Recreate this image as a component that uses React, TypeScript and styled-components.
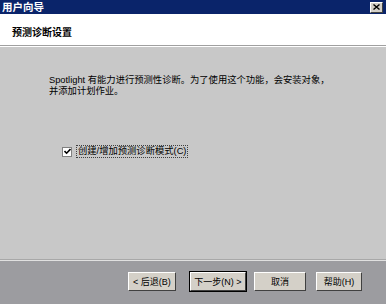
import { createGlobalStyle, styled } from "styled-components";

const GlobalStyle = createGlobalStyle`
  html, body {
    margin: 0;
    padding: 0;
    background: #c8c8c8;
  }
  body {
    font-family: "Liberation Sans", "Noto Sans CJK SC", sans-serif;
  }
`;

const Window = styled.div`
  width: 386px;
  height: 304px;
  display: flex;
  flex-direction: column;
  overflow: hidden;
  background: #c8c8c8;
`;

const TitleBar = styled.div`
  height: 14px;
  background: #0a246a;
  display: flex;
  align-items: center;
  justify-content: space-between;
  padding: 0 2px 0 2px;
`;

const TitleText = styled.span`
  color: #ffffff;
  font-size: 10.5px;
  font-weight: bold;
  line-height: 14px;
`;

const CloseButton = styled.div`
  width: 11px;
  height: 9px;
  margin-right: 1px;
  background: #d4d0c8;
  border-top: 1px solid #ffffff;
  border-left: 1px solid #ffffff;
  border-right: 1px solid #404040;
  border-bottom: 1px solid #404040;
  display: flex;
  align-items: center;
  justify-content: center;
`;

const Header = styled.div`
  height: 31px;
  background: #ffffff;
  display: flex;
  align-items: center;
  padding-left: 12px;
  border-bottom: 1px solid #a0a0a0;
`;

const HeaderText = styled.span`
  font-size: 10px;
  font-weight: bold;
  color: #000000;
  padding-top: 4px;
`;

const HeaderEdge = styled.div`
  height: 1px;
  background: #ffffff;
`;

const Content = styled.div`
  flex: 1;
  display: flex;
  flex-direction: column;
  padding: 28px 0 0 49px;
`;

const Paragraph = styled.p`
  margin: 0;
  font-size: 9.3px;
  line-height: 11px;
  color: #000000;
`;

const CheckRow = styled.label`
  display: flex;
  align-items: center;
  gap: 5px;
  margin: 49px 0 0 13px;
`;

const Box = styled.span`
  width: 8px;
  height: 8px;
  background: #ffffff;
  border: 1px solid #808080;
  display: flex;
  align-items: center;
  justify-content: center;
`;

const CheckLabel = styled.span`
  font-size: 9.3px;
  line-height: 11px;
  color: #000000;
  outline: 1px dotted #404040;
  padding: 0 1px;
`;

const BottomEdge = styled.div`
  height: 1px;
  background: #e0e0e0;
  border-top: 1px solid #a8a8a8;
`;

const ButtonBar = styled.div`
  height: 43px;
  background: #9c9ca0;
  display: flex;
  align-items: flex-start;
  justify-content: flex-end;
  padding: 11px 24px 0 0;
  box-sizing: border-box;
`;

const Button = styled.div<{ $default?: boolean; $width: number; $gap: number }>`
  width: ${(p) => p.$width}px;
  height: 19px;
  box-sizing: border-box;
  margin-left: ${(p) => p.$gap}px;
  background: #d4d0c8;
  border-top: 1px solid #ffffff;
  border-left: 1px solid #ffffff;
  border-right: 1px solid #404040;
  border-bottom: 1px solid #404040;
  outline: ${(p) => (p.$default ? "1px solid #000000" : "none")};
  display: flex;
  align-items: center;
  justify-content: center;
  font-size: 9px;
  color: #000000;
  white-space: nowrap;
`;

function CloseGlyph() {
  return (
    <svg width="7" height="6" viewBox="0 0 7 6">
      <path d="M0.5 0.5 L6.5 5.5 M6.5 0.5 L0.5 5.5" stroke="#000" strokeWidth="1.4" />
    </svg>
  );
}

function Check() {
  return (
    <svg width="7" height="7" viewBox="0 0 7 7">
      <path d="M0.5 3 L2.6 5.2 L6.5 1" stroke="#000" strokeWidth="1.6" fill="none" />
    </svg>
  );
}

export default function App() {
  return (
    <>
      <GlobalStyle />
      <Window>
        <TitleBar>
          <TitleText>用户向导</TitleText>
          <CloseButton>
            <CloseGlyph />
          </CloseButton>
        </TitleBar>
        <Header>
          <HeaderText>预测诊断设置</HeaderText>
        </Header>
        <HeaderEdge />
        <Content>
          <Paragraph>
            Spotlight 有能力进行预测性诊断。为了使用这个功能，会安装对象，
            <br />
            并添加计划作业。
          </Paragraph>
          <CheckRow>
            <Box>
              <Check />
            </Box>
            <CheckLabel>创建/增加预测诊断模式(C)</CheckLabel>
          </CheckRow>
        </Content>
        <BottomEdge />
        <ButtonBar>
          <Button $width={48} $gap={0}>
            &lt; 后退(B)
          </Button>
          <Button $width={56} $gap={14} $default>
            下一步(N) &gt;
          </Button>
          <Button $width={52} $gap={8}>
            取消
          </Button>
          <Button $width={46} $gap={10}>
            帮助(H)
          </Button>
        </ButtonBar>
      </Window>
    </>
  );
}
